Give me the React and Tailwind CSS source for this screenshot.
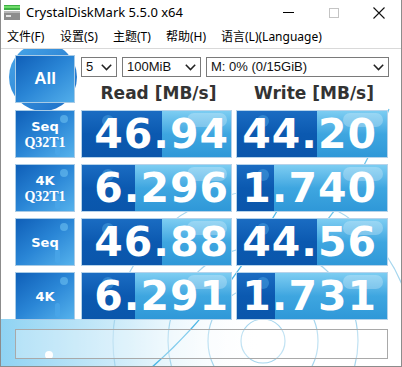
import React from "react";

const sans = { fontFamily: '"Liberation Sans", Arial, sans-serif' };
const dv = { fontFamily: '"DejaVu Sans", Verdana, sans-serif' };
const cjk = { fontFamily: '"Noto Sans", "Noto Sans CJK SC", sans-serif' };

function Chevron() {
  return (
    <svg width="11" height="7" viewBox="0 0 11 7" className="shrink-0">
      <polyline points="0.8,0.8 5.5,5.6 10.2,0.8" fill="none" stroke="#222" strokeWidth="1.5" />
    </svg>
  );
}

function Select({ w, text }) {
  return (
    <div
      className="h-[20px] border border-[#7a7a7a] bg-white flex items-center justify-between pl-[4px] pr-[4px] text-[13px] text-[#111]"
      style={{ width: w, ...sans }}
    >
      <span>{text}</span>
      <Chevron />
    </div>
  );
}

function Label({ children }) {
  return (
    <div className="relative w-[60px] h-[48px] border border-[#a8cbe6] bg-gradient-to-br from-[#0f5fb8] via-[#2a86d6] to-[#55b2ec] flex flex-col items-center justify-center text-white font-bold overflow-hidden">
      <div className="absolute right-[6px] top-[4px] w-[8px] h-[8px] rounded-full bg-[#6cc0f0] opacity-60" />
      <div className="absolute right-[14px] bottom-[2px] w-[5px] h-[14px] rounded-full bg-[#4aa6ea] opacity-70" />
      <div className="relative flex flex-col items-center gap-[1px]">{children}</div>
    </div>
  );
}

function Value({ text, fill, right }) {
  return (
    <div
      className="relative h-[48px] border border-[#b6d3ea] overflow-hidden flex items-center justify-end bg-gradient-to-b from-[#7ccdf2] via-[#3ea6e0] to-[#2f98d8]"
      style={{ width: right ? 152 : 151, paddingRight: right ? 10 : 2 }}
    >
      <div
        className="absolute left-0 top-0 bottom-0 bg-gradient-to-b from-[#1a6cc2] via-[#0b59b0] to-[#0a56ab]"
        style={{ width: fill }}
      />
      <div className="absolute right-[4px] top-[2px] w-[40px] h-[14px] rounded-[10px] bg-white opacity-25" />
      <div className="absolute left-[20px] top-[4px] w-[12px] h-[12px] rounded-full bg-[#5ab4ec] opacity-40" />
      <span
        className="relative text-white font-bold text-[41px] leading-none tracking-[1px]"
        style={dv}
      >
        {text}
      </span>
    </div>
  );
}

const rows = [
  { l1: "Seq", l2: "Q32T1", r: "46.94", w: "44.20", rf: 80, wf: 80 },
  { l1: "4K", l2: "Q32T1", r: "6.296", w: "1.740", rf: 53, wf: 37 },
  { l1: "Seq", l2: null, r: "46.88", w: "44.56", rf: 80, wf: 80 },
  { l1: "4K", l2: null, r: "6.291", w: "1.731", rf: 53, wf: 38 },
];

export default function App() {
  return (
    <div className="w-[402px] h-[367px] bg-white overflow-hidden flex flex-col border-x border-[#8c8c8c]">
      {/* Title bar */}
      <div className="h-[25px] flex items-center shrink-0">
        <svg width="16" height="15" viewBox="0 0 16 15" className="ml-[3px]">
          <rect x="0" y="0" width="16" height="5" fill="#3cb043" />
          <rect x="0" y="1" width="16" height="2" fill="#6fdc6a" />
          <rect x="0" y="6" width="16" height="9" fill="#8d8d8d" />
          <rect x="0" y="6" width="16" height="2" fill="#b9b9b9" />
          <rect x="2" y="10" width="5" height="2" fill="#e6e6e6" />
        </svg>
        <span className="ml-[6px] text-[13px] text-black" style={cjk}>
          CrystalDiskMark 5.5.0 x64
        </span>
        <div className="ml-auto flex items-center h-full">
          <div className="w-[45px] h-full flex items-center justify-center">
            <div className="w-[11px] h-px bg-black" />
          </div>
          <div className="w-[45px] h-full flex items-center justify-center">
            <div className="w-[10px] h-[10px] border border-[#c4c4c4]" />
          </div>
          <div className="w-[45px] h-full flex items-center justify-center">
            <svg width="12" height="12" viewBox="0 0 12 12">
              <path d="M0.5 0.5 L11.5 11.5 M11.5 0.5 L0.5 11.5" stroke="#111" strokeWidth="1.1" />
            </svg>
          </div>
        </div>
      </div>
      {/* Menu */}
      <div className="h-[23px] flex items-center text-[12px] text-black shrink-0 pl-[6px]" style={cjk}>
        <span className="w-[53px]">文件(F)</span>
        <span className="w-[53px]">设置(S)</span>
        <span className="w-[53px]">主题(T)</span>
        <span className="w-[55px]">帮助(H)</span>
        <span>语言(L)(Language)</span>
      </div>
      {/* Content */}
      <div className="relative flex-1 border-t border-b border-[#d9d9d9] border-b-[#8c8c8c] overflow-hidden bg-white">
        <svg className="absolute inset-0" width="400" height="319" viewBox="0 0 400 319">
          <defs>
            <linearGradient id="bl" x1="0" y1="0" x2="1" y2="1">
              <stop offset="0" stopColor="#4aa8ea" />
              <stop offset="1" stopColor="#1a6cc6" />
            </linearGradient>
            <linearGradient id="bot" x1="0" y1="0" x2="1" y2="0">
              <stop offset="0" stopColor="#8fd3f3" />
              <stop offset="0.5" stopColor="#d4eefa" />
              <stop offset="1" stopColor="#ffffff" stopOpacity="0" />
            </linearGradient>
          </defs>
          <circle cx="42" cy="28" r="34" fill="url(#bl)" />
          <rect x="0" y="270" width="260" height="50" fill="url(#bot)" />
          <g fill="none" stroke="#a6d6ee" strokeWidth="1.2">
            <circle cx="262" cy="292" r="22" />
            <circle cx="262" cy="292" r="55" />
            <circle cx="262" cy="292" r="95" />
            <circle cx="262" cy="292" r="150" />
          </g>
          <path d="M150 319 Q 230 250 300 120" stroke="#4fb8e6" strokeWidth="1.5" fill="none" />
          <path d="M388 60 Q 360 140 300 200" stroke="#6cc4ea" strokeWidth="1.2" fill="none" />
          <circle cx="48" cy="306" r="4" fill="#ffffff" />
        </svg>
        <div className="relative pl-[14px] pt-[6px] flex flex-col gap-[6px]">
          {/* Top row */}
          <div className="flex gap-[6px]">
            <div className="relative w-[60px] h-[48px] border border-[#a8cbe6] bg-gradient-to-br from-[#105fb8] via-[#2a86d6] to-[#52aeea] flex items-center justify-center">
              <span className="text-white font-bold text-[17px]" style={sans}>All</span>
            </div>
            <div className="flex flex-col">
              <div className="flex mt-[2px]">
                <Select w={36} text="5" />
                <div className="w-[5px]" />
                <Select w={79} text="100MiB" />
                <div className="w-[5px]" />
                <Select w={183} text="M: 0% (0/15GiB)" />
              </div>
              <div className="flex mt-[5px] text-[17px] font-bold text-[#333] leading-[22px]" style={dv}>
                <div className="w-[151px] text-center pl-[4px]">Read [MB/s]</div>
                <div className="w-[4px]" />
                <div className="w-[152px] text-center pl-[4px]">Write [MB/s]</div>
              </div>
            </div>
          </div>
          {rows.map((r, i) => (
            <div key={i} className="flex">
              <Label>
                <span className="text-[13px] leading-[15px]" style={dv}>{r.l1}</span>
                {r.l2 && (
                  <span className="text-[14px] leading-[15px]" style={{ fontFamily: '"Liberation Serif", serif' }}>{r.l2}</span>
                )}
              </Label>
              <div className="w-[6px]" />
              <Value text={r.r} fill={r.rf} />
              <div className="w-[4px]" />
              <Value text={r.w} fill={r.wf} right />
            </div>
          ))}
          <div className="mt-[3px] w-[373px] h-[30px] border border-[#a9a9a9] bg-white/30" />
        </div>
      </div>
    </div>
  );
}
